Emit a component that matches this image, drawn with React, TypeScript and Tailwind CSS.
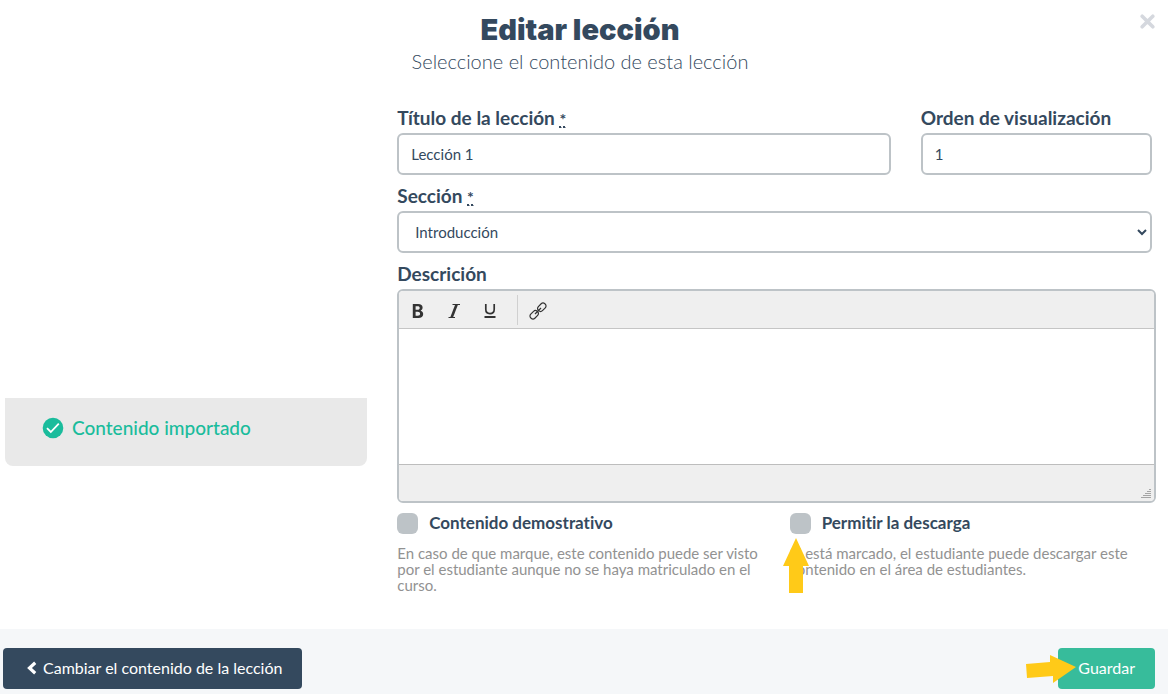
import { useState } from "react";

const labelClass =
  "mb-0.5 block pt-2 text-[19px] leading-[26px] font-bold text-[#34495e]";
const fieldClass =
  "h-[42px] w-full rounded-md border-2 border-[#bdc3c7] bg-white px-3 text-[15px] text-[#34495e] focus:border-[#1abc9c] focus:outline-none";

function Required() {
  return (
    <abbr
      title="obligatorio"
      className="inline-block border-b border-dotted border-gray-400 text-base leading-4 underline decoration-dotted decoration-2"
    >
      *
    </abbr>
  );
}

function ToolButton({ label, children }: any) {
  return (
    <button
      type="button"
      aria-label={label}
      className="flex h-8 w-9 items-center justify-center rounded text-[#333] hover:bg-gray-200"
    >
      {children}
    </button>
  );
}

function Editor() {
  return (
    <div className="-mr-1 overflow-hidden rounded-md border-2 border-[#bdc3c7]">
      <div className="flex h-[38px] items-center border-b border-[#c5c5c5] bg-[#efefef]">
        <ToolButton label="Negrita">
          <svg viewBox="0 0 20 20" className="mt-0.5 ml-0.5 size-5">
            <path
              d="M4.8 3h5.3c2.9 0 4.5 1.3 4.5 3.6 0 1.5-.7 2.6-2 3.1 1.7.5 2.6 1.6 2.6 3.3 0 2.6-1.8 4-4.9 4H4.8zM7.6 5.2v3.5h1.9c1.4 0 2.2-.6 2.2-1.8s-.7-1.7-2.1-1.7zm0 5.6v4h2.1c1.6 0 2.4-.7 2.4-2s-.8-2-2.4-2z"
              fill="currentColor"
              fillRule="evenodd"
            />
          </svg>
        </ToolButton>
        <ToolButton label="Cursiva">
          <svg viewBox="0 0 20 20" className="mt-0.5 ml-0.5 size-5" fill="none" stroke="currentColor">
            <path d="M8.5 3.5H16M4.5 16.5H11" strokeWidth="1.1" />
            <path d="M12.6 3.5 7.6 16.5" strokeWidth="2.6" />
          </svg>
        </ToolButton>
        <ToolButton label="Subrayado">
          <svg viewBox="0 0 20 20" className="mt-0.5 ml-0.5 size-5" fill="none" stroke="currentColor">
            <path d="M5.8 3v5.6c0 2.6 1.6 4 4.2 4s4.2-1.4 4.2-4V3" strokeWidth="1.7" />
            <path d="M4.5 16h11" strokeWidth="2" />
          </svg>
        </ToolButton>
        <div className="ml-2.5 h-[30px] border-l border-[#d0d0d0]" />
        <ToolButton label="Enlace">
          <svg
            viewBox="0 0 20 20"
            className="mt-0.5 ml-1 size-5"
            fill="none"
            stroke="currentColor"
            strokeWidth="1.2"
          >
            <rect x="-4.6" y="-2.9" width="9.2" height="5.8" rx="2.6" transform="translate(13.8 6.2) rotate(-45)" />
            <rect x="-4.6" y="-2.9" width="9.2" height="5.8" rx="2.6" transform="translate(6.2 13.8) rotate(-45)" />
            <path d="m7 13 6-6" />
          </svg>
        </ToolButton>
      </div>
      <textarea
        id="descripcion"
        className="block h-[135px] w-full resize-none bg-white p-2 text-[15px] text-[#34495e] focus:outline-none"
      />
      <div className="flex h-[37px] items-end justify-end border-t border-[#bdbdbd] bg-[#efefef] p-0.5">
        <svg viewBox="0 0 11 10" className="h-2.5 w-[11px]" shapeRendering="crispEdges">
          <path
            d="M8 .5h2M6 2.5h4M4 4.5h6M2 6.5h8M0 8.5h10"
            stroke="#a5a5a5"
            strokeWidth="1"
          />
        </svg>
      </div>
    </div>
  );
}

function Option({ id, label, help, children }: any) {
  return (
    <div className="relative">
      <div className="flex items-center gap-[11px]">
        <input
          id={id}
          type="checkbox"
          className="size-[21px] shrink-0 appearance-none rounded-md bg-[#bdc3c7] checked:bg-[#1abc9c]"
        />
        <label htmlFor={id} className="text-[17px] leading-6 font-bold text-[#34495e]">
          {label}
        </label>
      </div>
      <p className="mt-2.5 text-[15px] leading-4 text-[#929292]">{help}</p>
      {children}
    </div>
  );
}

export default function App() {
  const [title, setTitle] = useState<string>("Lección 1");
  const [order, setOrder] = useState<string>("1");

  return (
    <form
      className="bg-white font-['Lato',sans-serif] text-[#34495e] [font-variant-ligatures:none]"
      onSubmit={(e) => e.preventDefault()}
    >
      <header className="relative h-[97px] pt-3 pr-2 text-center">
        <h1 className="font-['Inter','Lato',sans-serif] text-[29px] leading-9 font-black">
          Editar lección
        </h1>
        <p className="text-xl leading-[26px] font-light">Seleccione el contenido de esta lección</p>
        <button
          type="button"
          aria-label="Cerrar"
          className="absolute top-3 right-[11px] p-0.5 text-[#d5d8de] hover:text-gray-400"
        >
          <svg viewBox="0 0 15 15" className="size-[15px]">
            <path d="m2.2 2.2 10.6 10.6m0-10.6-10.6 10.6" stroke="currentColor" strokeWidth="3.6" strokeLinecap="round" />
          </svg>
        </button>
      </header>

      <main className="grid grid-cols-[12fr_25fr] gap-[30px] pr-4 pb-9 pl-[5px]">
        <section>
          <div className="h-[301px]" />
          <div className="flex h-[68px] items-center gap-2 rounded-b-lg bg-[#e9e9e9] pb-2 pl-[37px] text-[#1abc9c]">
            <svg viewBox="0 0 22 22" className="size-[22px]">
              <circle cx="11" cy="11" r="10.3" fill="currentColor" />
              <path d="m5 11.2 3.8 3.8 8-8.4" fill="none" stroke="#fff" strokeWidth="1.8" />
            </svg>
            <span className="text-[19px] leading-6 font-medium">Contenido importado</span>
          </div>
        </section>

        <section>
          <div className="grid grid-cols-[32fr_15fr] gap-[30px]">
            <div>
              <label htmlFor="titulo" className={labelClass}>
                Título de la lección <Required />
              </label>
              <input
                id="titulo"
                className={fieldClass}
                value={title}
                onChange={(e) => setTitle(e.target.value)}
              />
            </div>
            <div>
              <label htmlFor="orden" className={labelClass}>
                Orden de visualización
              </label>
              <input
                id="orden"
                className={fieldClass}
                value={order}
                onChange={(e) => setOrder(e.target.value)}
              />
            </div>
          </div>

          <label htmlFor="seccion" className={labelClass}>
            Sección <Required />
          </label>
          <select id="seccion" className={fieldClass}>
            <option>Introducción</option>
          </select>

          <label htmlFor="descripcion" className={labelClass}>
            Descrición
          </label>
          <Editor />

          <div className="mt-2 grid grid-cols-2 gap-[30px]">
            <Option
              id="demo"
              label="Contenido demostrativo"
              help="En caso de que marque, este contenido puede ser visto por el estudiante aunque no se haya matriculado en el curso."
            />
            <Option
              id="descarga"
              label="Permitir la descarga"
              help="Si está marcado, el estudiante puede descargar este contenido en el área de estudiantes."
            >
              <svg viewBox="0 0 26 56" className="pointer-events-none absolute top-[27px] -left-[7px] h-14 w-[26px]">
                <path d="M13 0 26 28h-6v27H6V28H0z" fill="#ffca18" />
              </svg>
            </Option>
          </div>
        </section>
      </main>

      <footer className="flex items-center justify-between bg-[#f5f7f9] pt-[19px] pr-[13px] pb-[5px] pl-[3px]">
        <button
          type="button"
          className="flex h-[41px] items-center gap-1.5 rounded bg-[#34495e] pr-5 pb-0.5 pl-[23px] text-base text-white hover:bg-[#2c3e50]"
        >
          <svg viewBox="0 0 11 14" className="h-3.5 w-[11px]">
            <path d="M9.2 1.8 3.5 7l5.7 5.2" fill="none" stroke="currentColor" strokeWidth="3.2" />
          </svg>
          Cambiar el contenido de la lección
        </button>
        <div className="relative">
          <button
            type="submit"
            className="h-[41px] rounded bg-[#37bc9b] px-5 pb-0.5 text-base text-white hover:bg-[#2fa789]"
          >
            Guardar
          </button>
          <svg viewBox="0 0 50 28" className="pointer-events-none absolute top-[7px] -left-8 h-7 w-[50px]">
            <path d="m0 9 24-2V0l26 12-23 16v-7L1 23z" fill="#ffca18" />
          </svg>
        </div>
      </footer>
    </form>
  );
}
